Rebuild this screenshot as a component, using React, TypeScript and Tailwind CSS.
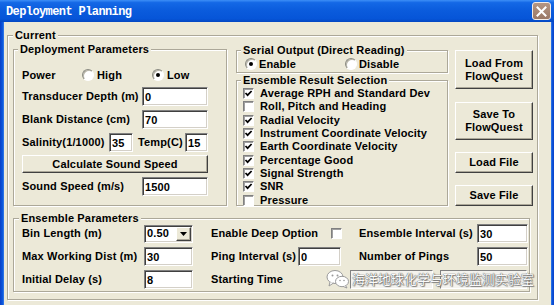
import React from "react";

function GroupBox({
  label,
  labelClass,
  className,
  children,
}: {
  label: string;
  labelClass: string;
  className: string;
  children?: React.ReactNode;
}) {
  return (
    <div
      className={`relative shrink-0 border border-[#aca899] shadow-[inset_1px_1px_0_#ffffff,1px_1px_0_#ffffff] ${className}`}
    >
      <span
        className={`absolute top-[-7px] bg-[#ece9d8] px-[2px] leading-[12px] whitespace-nowrap ${labelClass}`}
      >
        {label}
      </span>
      {children}
    </div>
  );
}

function Field({ value, className }: { value: string; className: string }) {
  return (
    <input
      readOnly
      value={value}
      className={`h-[19px] shrink-0 bg-white border border-t-[#808080] border-l-[#808080] border-b-white border-r-white shadow-[inset_1px_1px_0_#404040,inset_-1px_-1px_0_#d4d0c8] pl-[2px] text-[11px] font-bold text-black outline-none ${className}`}
    />
  );
}

function Radio({ checked }: { checked?: boolean }) {
  return (
    <span className="relative inline-block shrink-0 w-[12px] h-[12px] rounded-full bg-white border border-t-[#8a8a80] border-l-[#8a8a80] border-b-white border-r-white shadow-[inset_1px_1px_0_#b8b5a8]">
      {checked && (
        <span className="absolute left-[3px] top-[3px] w-[4px] h-[4px] rounded-full bg-black" />
      )}
    </span>
  );
}

function Check({ checked }: { checked?: boolean }) {
  return (
    <span className="relative inline-block shrink-0 w-[11px] h-[11px] bg-white border border-t-[#808080] border-l-[#808080] border-b-white border-r-white shadow-[inset_1px_1px_0_#a0a0a0]">
      {checked && (
        <svg
          className="absolute left-0 top-0"
          width="9"
          height="9"
          viewBox="0 0 9 9"
        >
          <polyline
            points="1.5,4 3.6,6.2 7.6,2"
            fill="none"
            stroke="#000"
            strokeWidth="1.7"
          />
        </svg>
      )}
    </span>
  );
}

function Btn({
  children,
  className,
}: {
  children: React.ReactNode;
  className: string;
}) {
  return (
    <button
      className={`shrink-0 flex items-center justify-center text-center leading-[13px] bg-[#ece9d8] border border-t-white border-l-white border-b-[#404040] border-r-[#404040] shadow-[inset_-1px_-1px_0_#aca899] text-[11px] font-bold text-black tracking-[0.15px] ${className}`}
    >
      {children}
    </button>
  );
}

const results: [string, boolean][] = [
  ["Average RPH and Standard Dev", true],
  ["Roll, Pitch and Heading", false],
  ["Radial Velocity", true],
  ["Instrument Coordinate Velocity", true],
  ["Earth Coordinate Velocity", true],
  ["Percentage Good", true],
  ["Signal Strength", true],
  ["SNR", true],
  ["Pressure", false],
];

export default function App() {
  return (
    <div className="relative w-[554px] h-[305px] overflow-hidden bg-[#ece9d8] font-['Liberation_Sans',Arial,sans-serif] text-[11px] font-bold text-black tracking-[0.15px]">
      {/* Title bar */}
      <div className="flex items-center h-[22px] bg-[linear-gradient(to_bottom,#3d8ff7_0%,#1468e6_12%,#0a5bdc_50%,#0655d8_85%,#0447c2_100%)] pl-[6px] pr-[3px]">
        <span className="flex-1 pt-[2px] text-white font-['Liberation_Mono',monospace] text-[12px] tracking-[-0.6px] leading-[14px]">
          Deployment Planning
        </span>
        <div className="w-[19px] h-[18px] rounded-[3px] border border-[#f4ece6] bg-[linear-gradient(to_bottom,#b59684,#9a7866)] flex items-center justify-center">
          <svg width="11" height="11" viewBox="0 0 11 11">
            <path
              d="M1.5 1.5 L9.5 9.5 M9.5 1.5 L1.5 9.5"
              stroke="#fff"
              strokeWidth="2"
              strokeLinecap="square"
            />
          </svg>
        </div>
      </div>

      {/* Body */}
      <div className="flex h-[283px]">
        <div className="w-[4px] bg-[linear-gradient(to_right,#0a3fc6,#0a56dc_60%,#3b7ee8)]" />
        <div className="flex-1">
          <GroupBox
            label="Current"
            labelClass="left-[5px]"
            className="ml-[3px] mt-[13px] w-[531px] h-[265px]"
          >
            <div className="flex pl-[5px] pt-[13px]">
              {/* Deployment Parameters */}
              <GroupBox
                label="Deployment Parameters"
                labelClass="left-[4px]"
                className="w-[214px] h-[157px]"
              >
                <div className="flex flex-col pl-[8px]">
                  <div className="flex items-center h-[16px] mt-[17px]">
                    <span className="w-[60px]">Power</span>
                    <div className="flex items-center w-[70px]">
                      <Radio />
                      <span className="ml-[3px]">High</span>
                    </div>
                    <div className="flex items-center">
                      <Radio checked />
                      <span className="ml-[3px]">Low</span>
                    </div>
                  </div>
                  <div className="flex items-center mt-[4px]">
                    <span className="w-[120px] whitespace-nowrap">
                      Transducer Depth (m)
                    </span>
                    <Field value="0" className="w-[66px]" />
                  </div>
                  <div className="flex items-center mt-[4px]">
                    <span className="w-[120px]">Blank Distance (cm)</span>
                    <Field value="70" className="w-[66px]" />
                  </div>
                  <div className="flex items-center mt-[4px]">
                    <span className="w-[87px] whitespace-nowrap">
                      Salinity(1/1000)
                    </span>
                    <Field value="35" className="w-[24px]" />
                    <span className="ml-[5px] w-[47px]">Temp(C)</span>
                    <Field value="15" className="w-[23px]" />
                  </div>
                  <Btn className="mt-[3px] w-[186px] h-[18px]">
                    Calculate Sound Speed
                  </Btn>
                  <div className="flex items-center mt-[4px]">
                    <span className="w-[120px]">Sound Speed (m/s)</span>
                    <Field value="1500" className="w-[66px]" />
                  </div>
                </div>
              </GroupBox>

              {/* Middle column */}
              <div className="flex flex-col ml-[9px] mt-[1px] w-[212px]">
                <GroupBox
                  label="Serial Output (Direct Reading)"
                  labelClass="left-[4px]"
                  className="w-[212px] h-[23px]"
                >
                  <div className="flex items-center h-[12px] mt-[7px] pl-[8px]">
                    <div className="flex items-center w-[100px]">
                      <Radio checked />
                      <span className="ml-[2px]">Enable</span>
                    </div>
                    <div className="flex items-center">
                      <Radio />
                      <span className="ml-[2px]">Disable</span>
                    </div>
                  </div>
                </GroupBox>
                <GroupBox
                  label="Ensemble Result Selection"
                  labelClass="left-[4px]"
                  className="mt-[7px] w-[212px] h-[126px]"
                >
                  <div className="flex flex-col pt-[6px] pl-[6px]">
                    {results.map(([t, c]) => (
                      <div key={t} className="flex items-center h-[13.33px]">
                        <Check checked={c} />
                        <span className="ml-[6px] whitespace-nowrap leading-[13px]">
                          {t}
                        </span>
                      </div>
                    ))}
                  </div>
                </GroupBox>
              </div>

              {/* Buttons */}
              <div className="flex flex-col ml-[7px] mt-[1px] w-[78px]">
                <Btn className="w-[78px] h-[39px]">
                  Load From
                  <br />
                  FlowQuest
                </Btn>
                <Btn className="mt-[13px] w-[78px] h-[38px]">
                  Save To
                  <br />
                  FlowQuest
                </Btn>
                <Btn className="mt-[12px] w-[78px] h-[21px]">Load File</Btn>
                <Btn className="mt-[12px] w-[78px] h-[21px]">Save File</Btn>
              </div>
            </div>

            {/* Ensemble Parameters */}
            <GroupBox
              label="Ensemble Parameters"
              labelClass="left-[5px]"
              className="ml-[5px] mt-[12px] w-[517px] h-[74px]"
            >
              <div className="flex flex-col pt-[3px] pl-[8px]">
                <div className="flex items-center h-[23px]">
                  <span className="w-[122px]">Bin Length (m)</span>
                  <div className="relative w-[49px] h-[18px] shrink-0 bg-white border border-t-[#808080] border-l-[#808080] border-b-white border-r-white shadow-[inset_1px_1px_0_#404040,inset_-1px_-1px_0_#d4d0c8] flex items-center pl-[2px]">
                    <span className="flex-1">0.50</span>
                    <div className="mr-[1px] w-[15px] h-[14px] bg-[#ece9d8] border border-t-white border-l-white border-b-[#404040] border-r-[#404040] shadow-[inset_-1px_-1px_0_#aca899] flex items-center justify-center">
                      <svg width="7" height="4" viewBox="0 0 7 4">
                        <path d="M0 0 H7 L3.5 4 Z" fill="#000" />
                      </svg>
                    </div>
                  </div>
                  <span className="w-[18px]" />
                  <div className="flex items-center w-[148px]">
                    <span className="w-[120px] whitespace-nowrap">
                      Enable Deep Option
                    </span>
                    <Check />
                  </div>
                  <span className="w-[118px] whitespace-nowrap">
                    Ensemble Interval (s)
                  </span>
                  <Field value="30" className="w-[51px]" />
                </div>
                <div className="flex items-center h-[23px]">
                  <span className="w-[122px] whitespace-nowrap">
                    Max Working Dist (m)
                  </span>
                  <Field value="30" className="w-[49px]" />
                  <span className="w-[18px]" />
                  <div className="flex items-center w-[148px]">
                    <span className="w-[87px] whitespace-nowrap">
                      Ping Interval (s)
                    </span>
                    <Field value="0" className="w-[43px]" />
                  </div>
                  <span className="w-[118px]">Number of Pings</span>
                  <Field value="50" className="w-[51px]" />
                </div>
                <div className="flex items-center h-[23px]">
                  <span className="w-[122px]">Initial Delay (s)</span>
                  <Field value="8" className="w-[49px]" />
                  <span className="w-[18px]" />
                  <span className="w-[139px] whitespace-nowrap">
                    Starting Time
                  </span>
                  <div className="w-[83px] h-[19px] shrink-0 bg-[#f4f3ee] border border-t-[#808080] border-l-[#808080] border-b-white border-r-white" />
                  <div className="ml-[7px] w-[87px] h-[19px] shrink-0 bg-[#f4f3ee] border border-t-[#808080] border-l-[#808080] border-b-white border-r-white" />
                </div>
              </div>
            </GroupBox>
          </GroupBox>
        </div>
        <div className="w-[3px] bg-[linear-gradient(to_right,#3b7ee8,#0a56dc_40%,#0a3fc6)]" />
      </div>

      {/* Watermark overlay */}
      <div className="absolute left-[326px] top-[269px] flex items-center pointer-events-none">
        <svg width="24" height="20" viewBox="0 0 24 20">
          <ellipse cx="9" cy="8" rx="8" ry="6.5" fill="#fff" stroke="#9a9a9a" strokeWidth="1" />
          <path d="M4 13 L3 17 L7.5 14" fill="#fff" stroke="#9a9a9a" strokeWidth="1" />
          <ellipse cx="16" cy="12.5" rx="6.5" ry="5.2" fill="#fff" stroke="#9a9a9a" strokeWidth="1" />
          <path d="M19.5 16.5 L21 19 L17 17.4" fill="#fff" stroke="#9a9a9a" strokeWidth="1" />
          <circle cx="6.5" cy="6.5" r="1" fill="#9a9a9a" />
          <circle cx="11.5" cy="6.5" r="1" fill="#9a9a9a" />
          <circle cx="14" cy="11.5" r="0.8" fill="#9a9a9a" />
          <circle cx="18" cy="11.5" r="0.8" fill="#9a9a9a" />
        </svg>
        <span className="ml-[2px] font-['Noto_Sans_CJK_SC',sans-serif] font-normal tracking-normal text-[13px] leading-[18px] text-[#fafafa] [text-shadow:0_0_1px_#555,0_0_1px_#555,1px_1px_1px_#888] whitespace-nowrap">
          海洋地球化学与环境监测实验室
        </span>
      </div>
    </div>
  );
}
